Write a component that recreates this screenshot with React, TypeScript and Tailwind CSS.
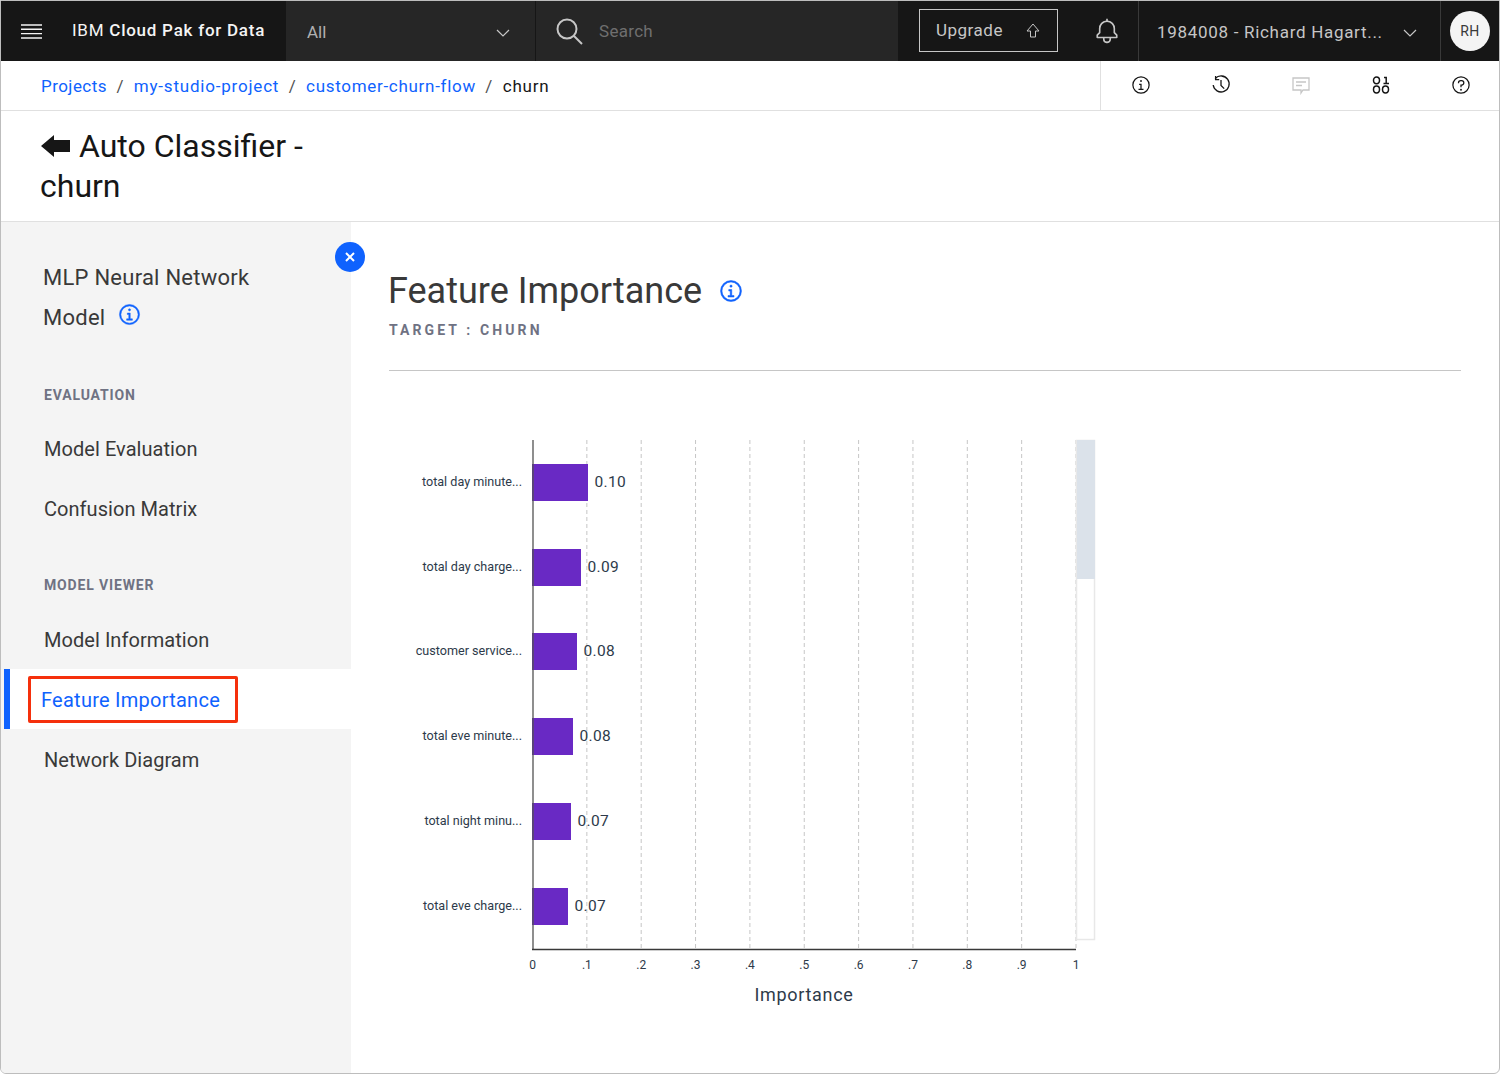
import type { ReactNode } from "react";

const font = { fontFamily: "Roboto, 'Noto Sans', sans-serif" };

const bars = [
  { label: "total day minute...", value: "0.10", y: 464, w: 56 },
  { label: "total day charge...", value: "0.09", y: 549, w: 49 },
  { label: "customer service...", value: "0.08", y: 633, w: 45 },
  { label: "total eve minute...", value: "0.08", y: 718, w: 41 },
  { label: "total night minu...", value: "0.07", y: 803, w: 39 },
  { label: "total eve charge...", value: "0.07", y: 888, w: 36 },
];

const ticks = ["0", ".1", ".2", ".3", ".4", ".5", ".6", ".7", ".8", ".9", "1"];

function InfoIcon({ size, className, bold }: { size: number; className?: string; bold?: boolean }) {
  return (
    <svg
      width={size}
      height={size}
      viewBox="0 0 32 32"
      fill="currentColor"
      stroke="currentColor"
      strokeWidth={bold ? 0.7 : 0}
      className={className}
    >
      <path d="M17 22v-8h-4v2h2v6h-3v2h8v-2h-3z" />
      <path d="M16 8a1.5 1.5 0 1 0 1.5 1.5A1.5 1.5 0 0 0 16 8z" />
      <path d="M16 30a14 14 0 1 1 14-14 14 14 0 0 1-14 14zm0-26a12 12 0 1 0 12 12A12 12 0 0 0 16 4z" />
    </svg>
  );
}

function Chevron({ className }: { className?: string }) {
  return (
    <svg width="14" height="8" viewBox="0 0 14 8" fill="none" stroke="currentColor" strokeWidth="1.2" className={className}>
      <path d="M1 1l6 6 6-6" />
    </svg>
  );
}

function Slash() {
  return <span className="text-[#525252] mx-[9.5px]">/</span>;
}

function ToolButton({ children }: { children: ReactNode }) {
  return <div className="w-20 h-full shrink-0 flex items-center justify-center text-[#161616] -mt-[1px]">{children}</div>;
}

function Header() {
  return (
    <header className="h-[60px] bg-[#161616] flex items-stretch shrink-0 text-[#c6c6c6]">
      <div className="w-[285px] flex items-center shrink-0">
        <svg width="21" height="15" viewBox="0 0 21 15" stroke="#f4f4f4" strokeWidth="1.4" className="ml-[20px]">
          <path d="M0 1h21M0 5.3h21M0 9.6h21M0 14h21" />
        </svg>
        <span className="ml-[30px] text-[17px] text-[#f4f4f4] tracking-[0.75px] font-medium">
          <span className="font-normal">IBM</span> Cloud Pak for Data
        </span>
      </div>
      <div className="w-[612px] bg-[#262626] flex items-stretch">
        <div className="w-[250px] border-r border-[#161616] flex items-center justify-between pl-[21px] pr-[25px]">
          <span className="text-[17px] text-[#b0b0b0] mt-[3px]">All</span>
          <Chevron className="text-[#c6c6c6] mt-[4px]" />
        </div>
        <div className="flex items-center pl-[20px]">
          <svg width="27" height="27" viewBox="0 0 27 27" fill="none" stroke="#c6c6c6" strokeWidth="2">
            <circle cx="11" cy="11" r="9.5" />
            <path d="M18 18l8 8" />
          </svg>
          <span className="ml-[16px] text-[17px] text-[#6f6f6f] tracking-[0.3px] mt-[1px]">Search</span>
        </div>
      </div>
      <div className="flex-1 flex items-center pl-[21px]">
        <div className="w-[139px] h-[43px] border border-[#c6c6c6] flex items-center pl-[16px] -mt-[1px]">
          <span className="text-[17px] tracking-[0.5px]">Upgrade</span>
          <svg width="14" height="16" viewBox="0 0 14 16" fill="none" stroke="#c6c6c6" strokeWidth="1" className="ml-[23px]">
            <path d="M7 1L1 8h3.5v6h5V8H13z" />
          </svg>
        </div>
        <svg width="26" height="26" viewBox="0 0 32 32" fill="#c6c6c6" className="ml-[36px] shrink-0">
          <path d="M28.7 20.3L26 17.6V13a10 10 0 0 0-9-9.95V1h-2v2.05A10 10 0 0 0 6 13v4.6l-2.7 2.7A1 1 0 0 0 3 21v3a1 1 0 0 0 1 1h7v.8a5.2 5.2 0 0 0 4.5 5.2 5 5 0 0 0 5.5-5v-1h7a1 1 0 0 0 1-1v-3a1 1 0 0 0-.3-.7zM19 26a3 3 0 0 1-6 0v-1h6zm8-3H5v-1.6l2.7-2.7A1 1 0 0 0 8 18v-5a8 8 0 0 1 16 0v5a1 1 0 0 0 .3.7l2.7 2.7z" />
        </svg>
        <div className="ml-[18px] w-[303px] h-full border-x border-[#393939] flex items-center justify-between pl-[18px] pr-[23px] shrink-0">
          <span className="text-[17px] tracking-[0.7px] mt-[3px]">1984008 - Richard Hagart...</span>
          <Chevron className="text-[#c6c6c6] mt-[3px]" />
        </div>
        <div className="flex-1 flex items-center justify-center">
          <div className="w-10 h-10 rounded-full bg-[#f4f4f4] flex items-center justify-center text-[14px] text-[#393939] tracking-[0.4px]">RH</div>
        </div>
      </div>
    </header>
  );
}

function Breadcrumb() {
  return (
    <div className="h-[50px] border-b border-[#e0e0e0] flex items-stretch shrink-0 text-[17px]">
      <div className="flex-1 flex items-center pl-[40px] pt-[2px] tracking-[0.8px]">
        <span className="text-[#0f62fe] tracking-[0.45px]">Projects</span>
        <Slash />
        <span className="text-[#0f62fe]">my-studio-project</span>
        <Slash />
        <span className="text-[#0f62fe] tracking-[0.7px]">customer-churn-flow</span>
        <Slash />
        <span className="text-[#161616]">churn</span>
      </div>
      <div className="w-[399px] border-l border-[#e0e0e0] flex items-center">
        <ToolButton>
          <InfoIcon size={20} />
        </ToolButton>
        <ToolButton>
          <svg width="20" height="20" viewBox="0 0 20 20" fill="none" stroke="#161616" strokeWidth="1.3">
            <path d="M4.2 3.6A8 8 0 1 1 2.2 10" />
            <path d="M4.6 1v3.6h3.6" />
            <path d="M10 5v5.4l3.2 3.2" />
          </svg>
        </ToolButton>
        <ToolButton>
          <svg width="20" height="20" viewBox="0 0 20 20" fill="none" stroke="#c6c6c6" strokeWidth="1.3">
            <path d="M2 3h16v12h-6l-2 3v-3H2z" />
            <path d="M5 7h10M5 10.5h6" />
          </svg>
        </ToolButton>
        <ToolButton>
          <svg width="18" height="18" viewBox="0 0 18 18" fill="none" stroke="#161616" strokeWidth="1.5">
            <ellipse cx="4.5" cy="4.3" rx="3" ry="3.4" />
            <path d="M12 1.4h2.2v6M11.5 7.6h5.5" />
            <ellipse cx="4.5" cy="13.5" rx="3" ry="3.4" />
            <ellipse cx="13.5" cy="13.5" rx="3" ry="3.4" />
          </svg>
        </ToolButton>
        <ToolButton>
          <svg width="20" height="20" viewBox="0 0 32 32" fill="#161616">
            <path d="M16 2a14 14 0 1 0 14 14A14 14 0 0 0 16 2zm0 26a12 12 0 1 1 12-12 12 12 0 0 1-12 12z" />
            <circle cx="16" cy="23.5" r="1.5" />
            <path d="M17 8h-1.5a4.49 4.49 0 0 0-4.5 4.5v.5h2v-.5a2.5 2.5 0 0 1 2.5-2.5H17a2.5 2.5 0 0 1 0 5h-2v4.5h2V17a4.5 4.5 0 0 0 0-9z" />
          </svg>
        </ToolButton>
      </div>
    </div>
  );
}

function TitleBar() {
  return (
    <div className="h-[111px] border-b border-[#e0e0e0] shrink-0 pl-[39px] pt-[15px] text-[32px] leading-[40px] text-[#161616]">
      <div className="flex items-center">
        <svg width="29" height="22" viewBox="0 0 29 22" fill="#161616" className="ml-[1px] mr-[9px]">
          <path d="M0 11L13 0v5h16v12H13v5z" />
        </svg>
        <span>Auto Classifier -</span>
      </div>
      <div>churn</div>
    </div>
  );
}

function SideLink({ children }: { children: ReactNode }) {
  return <div className="h-[60px] flex items-center pl-[43px] text-[20px] text-[#393939] tracking-[0.05px]">{children}</div>;
}

function SideHeading({ children }: { children: ReactNode }) {
  return <div className="pl-[43px] text-[14px] font-bold text-[#6f7283] tracking-[0.85px] leading-[20px]">{children}</div>;
}

function Sidebar() {
  return (
    <aside className="w-[350px] bg-[#f4f4f4] relative shrink-0">
      <div className="absolute -right-[14px] top-[20px] w-[30px] h-[30px] rounded-full bg-[#0f62fe] flex items-center justify-center">
        <svg width="10" height="10" viewBox="0 0 10 10" stroke="#fff" strokeWidth="2">
          <path d="M1 1l8 8M9 1l-8 8" />
        </svg>
      </div>
      <div className="pl-[42px] pt-[36px] text-[22px] leading-[40px] text-[#393939] tracking-[0.25px]">
        <div>MLP Neural Network</div>
        <div className="flex items-center">
          Model
          <InfoIcon size={23} bold className="text-[#0f62fe] ml-[13px] -mt-[8px]" />
        </div>
      </div>
      <div className="mt-[47px]">
        <SideHeading>EVALUATION</SideHeading>
      </div>
      <div className="mt-[14px]">
        <SideLink>Model Evaluation</SideLink>
        <SideLink>Confusion Matrix</SideLink>
      </div>
      <div className="mt-[36px]">
        <SideHeading>MODEL VIEWER</SideHeading>
      </div>
      <div className="mt-[15px]">
        <SideLink>Model Information</SideLink>
        <div className="ml-[3px] -mt-[1px] mb-[1px] h-[60px] bg-white border-l-[6px] border-[#0f62fe] flex items-center">
          <div className="ml-[18px] mt-[1px] w-[210px] h-[47px] border-[3px] border-[#f5300c] rounded-[2px] flex items-center pl-[10px] text-[20px] text-[#0f62fe] tracking-[0.25px]">
            Feature Importance
          </div>
        </div>
        <SideLink>Network Diagram</SideLink>
      </div>
    </aside>
  );
}

// chart coordinates are page pixels minus the svg origin (389, 420)
function Chart() {
  const ox = 389;
  const oy = 420;
  const x0 = 532.5;
  const step = 54.35;
  return (
    <svg width="720" height="600" className="block mt-[49px]" style={font}>
      {ticks.map((t, i) => {
        const x = x0 + i * step - ox;
        return (
          <g key={t}>
            {i > 0 && <line x1={x} y1={440 - oy} x2={x} y2={949 - oy} stroke="#c6c6c6" strokeDasharray="4 3" />}
            <text x={x} y={969 - oy} textAnchor="middle" fontSize="12" fill="#2d3a4a">
              {t}
            </text>
          </g>
        );
      })}
      <rect x={1076.5 - ox} y={440.5 - oy} width="18" height="499" fill="#fff" stroke="#e8e8e8" strokeWidth="1.5" />
      <rect x={1077 - ox} y={440 - oy} width="18" height="139" fill="#dbe2ea" />
      {bars.map((b) => (
        <g key={b.label}>
          <rect x={532 - ox} y={b.y - oy} width={b.w} height="37" fill="#6929c4" />
          <text x={522 - ox} y={b.y + 22 - oy} textAnchor="end" fontSize="12.6" fill="#2d3a4a">
            {b.label}
          </text>
          <text x={532.5 + b.w + 6 - ox} y={b.y + 23 - oy} fontSize="15.5" fill="#2d3a4a" letterSpacing="0.3">
            {b.value}
          </text>
        </g>
      ))}
      <line x1={533 - ox} y1={440 - oy} x2={533 - ox} y2={949 - oy} stroke="#525252" strokeWidth="1.3" />
      <line x1={532 - ox} y1={949.5 - oy} x2={1076 - ox} y2={949.5 - oy} stroke="#393939" strokeWidth="1.3" />
      <text x={804 - ox} y={1001 - oy} textAnchor="middle" fontSize="18" fill="#2d3a4a" letterSpacing="0.7">
        Importance
      </text>
    </svg>
  );
}

export default function App() {
  return (
    <div className="w-[1500px] h-[1074px] overflow-hidden bg-white border border-[#bdbdbd] rounded-b-[6px] flex flex-col" style={font}>
      <Header />
      <Breadcrumb />
      <TitleBar />
      <div className="flex-1 flex min-h-0">
        <Sidebar />
        <main className="flex-1 pl-[38px] pr-[38px] pt-[46px]">
          <div className="flex items-center -ml-[1px]">
            <h1 className="text-[36px] leading-[46px] text-[#393939]">Feature Importance</h1>
            <InfoIcon size={24} bold className="text-[#0f62fe] ml-[17px]" />
          </div>
          <div className="mt-[6px] text-[14px] leading-[20px] font-bold text-[#6f7283] tracking-[3.1px]">TARGET : CHURN</div>
          <div className="mt-[30px] border-b border-[#c6c6c6]" />
          <Chart />
        </main>
      </div>
    </div>
  );
}
